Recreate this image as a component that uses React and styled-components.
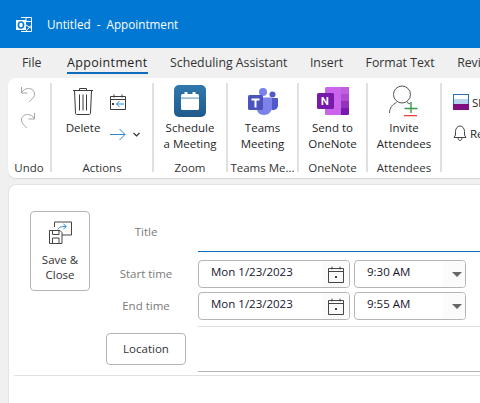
import React from 'react';
import styled, { createGlobalStyle } from 'styled-components';

const GlobalStyle = createGlobalStyle`
  html, body {
    margin: 0;
    padding: 0;
    background: #f0f0f0;
    overflow: hidden;
  }
  body {
    font-family: 'Open Sans', 'Noto Sans', sans-serif;
    color: #262626;
  }
`;

const Window = styled.div`
  width: 480px;
  height: 403px;
  overflow: hidden;
  background: #f0f0f0;
`;

const TitleBar = styled.div`
  height: 48px;
  background: #0078d4;
  display: flex;
  align-items: center;
  padding-left: 16px;
  gap: 14px;
  color: #fff;
  font-size: 11.7px;
  white-space: pre;
`;

const TabBar = styled.div`
  height: 30px;
  display: flex;
  padding-left: 22px;
  gap: 22.5px;
  font-size: 12.3px;
  white-space: nowrap;
`;

const Tab = styled.div`
  position: relative;
  line-height: 30px;
  color: ${({ $active }) => ($active ? '#1f1f1f' : '#333')};
  font-weight: ${({ $active }) => ($active ? 500 : 400)};
  ${({ $active }) =>
    $active &&
    `margin-left: 3px;
    font-size: 12.5px;
    letter-spacing: .35px;
    &::after {
      content: '';
      position: absolute;
      left: 0;
      right: 0;
      bottom: 4px;
      height: 2px;
      background: #0f6cbd;
    }`}
`;

const Ribbon = styled.div`
  height: 100px;
  box-sizing: border-box;
  margin-left: 8px;
  padding: 5px 0 6px;
  display: flex;
  background: #fff;
  border-radius: 8px 0 0 8px;
  box-shadow: 0 1px 1px #d8d8d8;
`;

const Group = styled.div`
  width: ${({ $w }) => $w}px;
  flex: none;
  box-sizing: border-box;
  display: flex;
  flex-direction: column;
  align-items: center;
  border-right: ${({ $last }) => ($last ? 'none' : '2px solid #e0e0e0')};
`;

const GroupBody = styled.div`
  flex: 1;
  align-self: stretch;
  display: flex;
  justify-content: center;
`;

const GroupLabel = styled.div`
  height: 16px;
  line-height: 16px;
  margin-bottom: -4px;
  font-size: 11.5px;
  color: #333;
  white-space: nowrap;
`;

const BigButton = styled.div`
  display: flex;
  flex-direction: column;
  align-items: center;
  padding-top: 2px;
  font-size: 11.5px;
  line-height: 16px;
  text-align: center;
  color: #262626;
  white-space: nowrap;
`;

const BigIcon = styled.div`
  height: 32px;
  margin-bottom: 3px;
  display: flex;
  align-items: center;
  justify-content: center;
`;

const UndoStack = styled.div`
  display: flex;
  flex-direction: column;
  gap: 9px;
  padding: 3px 2px 0 0;
`;

const ActionsRow = styled.div`
  display: flex;
  gap: 10px;
  padding-left: 2px;
`;

const SmallStack = styled.div`
  display: flex;
  flex-direction: column;
  gap: 17px;
  padding-top: 11px;
`;

const MoveRow = styled.div`
  display: flex;
  align-items: center;
  gap: 7px;
`;

const StatusStack = styled.div`
  align-self: stretch;
  display: flex;
  flex-direction: column;
  gap: 15px;
  padding: 11px 0 0 11px;
`;

const StatusRow = styled.div`
  display: flex;
  align-items: center;
  gap: 3px;
  font-size: 11.5px;
  white-space: nowrap;
`;

const Body = styled.div`
  height: 219px;
  margin: 6px 0 0 8px;
  box-sizing: border-box;
  background: #fff;
  border: 1px solid #e4e4e4;
  border-right: none;
  border-bottom: none;
  border-radius: 8px 0 0 0;
`;

const FormRow = styled.div`
  display: flex;
  padding: 26px 0 0 21px;
  height: 190px;
  box-sizing: border-box;
`;

const SaveButton = styled.div`
  width: 60px;
  height: 80px;
  flex: none;
  box-sizing: border-box;
  border: 1px solid #b4b4b4;
  border-radius: 4px;
  display: flex;
  flex-direction: column;
  align-items: center;
  padding-top: 9px;
  font-size: 11.5px;
  line-height: 15px;
  text-align: center;
  color: #333;
`;

const SaveIcon = styled.div`
  height: 24px;
  margin-bottom: 7px;
`;

const Fields = styled.div`
  flex: 1;
  align-self: flex-start;
  margin-left: 16px;
  display: grid;
  grid-template-columns: 80px 1fr;
  column-gap: 12px;
  grid-template-rows: 41px 36px 32px 13px 32px 7px;
  align-items: center;
`;

const FieldLabel = styled.div`
  text-align: center;
  font-size: 11.5px;
  color: #7a7a7a;
  margin-top: ${({ $top }) => $top || 0}px;
`;

const TitleInput = styled.div`
  align-self: stretch;
  border-bottom: 1px solid #0f6cbd;
`;

const DateRow = styled.div`
  display: flex;
  gap: 4px;
  height: 28px;
  align-self: end;
`;

const Control = styled.div`
  width: ${({ $w }) => $w}px;
  height: 28px;
  box-sizing: border-box;
  flex: none;
  display: flex;
  justify-content: space-between;
  border: 1px solid #b4b4b4;
  border-radius: 4px;
  overflow: hidden;
  font-size: 11.5px;
  color: #16162b;
`;

const ControlText = styled.div`
  padding-left: ${({ $pad }) => $pad}px;
  line-height: 22px;
  white-space: nowrap;
`;

const ControlEnd = styled.div`
  width: 16px;
  padding: 0 ${({ $pad }) => $pad}px 0 6px;
  background: #fbfbfb;
  display: flex;
  align-items: center;
  justify-content: center;
`;

const Arrow = styled.div`
  width: 0;
  height: 0;
  border-left: 5px solid transparent;
  border-right: 5px solid transparent;
  border-top: 5px solid #666;
  margin-top: 1px;
`;

const Rule = styled.div`
  grid-column: 2;
  height: 1px;
  align-self: center;
  background: #e0e0e0;
`;

const LocationButton = styled.div`
  height: 32px;
  box-sizing: border-box;
  border: 1px solid #b4b4b4;
  border-radius: 4px;
  font-size: 11.5px;
  line-height: 30px;
  text-align: center;
  color: #333;
`;

const LocationInput = styled.div`
  align-self: stretch;
  border-bottom: 1px solid #b4b4b4;
`;

const BodyRule = styled.div`
  margin-left: 5px;
  height: 1px;
  background: #e0e0e0;
`;

const OutlookIcon = () => (
  <svg width="17" height="17" viewBox="0 0 17 17">
    <path d="M5 1.500h10.500v14H5" fill="none" stroke="#fff" strokeWidth="1" />
    <path d="M5.500 5.500h10M10 1.500v4M10 9l5.500 3.500M10 15l5.500-6" fill="none" stroke="#fff" strokeWidth="1" />
    <rect x="0" y="4" width="10" height="10" fill="#fff" />
    <ellipse cx="5" cy="9" rx="2.600" ry="3" fill="none" stroke="#0078d4" strokeWidth="1.600" />
  </svg>
);

const UndoIcon = ({ flip }) => (
  <svg width="16" height="17" viewBox="0 0 16 17" style={flip ? { transform: 'scaleX(-1)' } : undefined}>
    <path d="M1.500 1v6h6" fill="none" stroke="#a6a6a6" strokeWidth="1" />
    <path d="M1.500 7C3 4 5.500 2.500 8.500 2.500 12 2.500 14.500 5 14.500 8c0 2.500-1.500 4.500-4 6.500l-1 1.500" fill="none" stroke="#a6a6a6" strokeWidth="1" />
  </svg>
);

const TrashIcon = () => (
  <svg width="22" height="29" viewBox="0 0 22 29">
    <path d="M7.500 3V1.500h7V3M1 3.500h20M2.500 3.500l1 22.500c0 1 .7 1.500 1.500 1.500h12c.8 0 1.500-.5 1.500-1.500l1-22.500M7.500 7.500v16M11 7.500v16M14.500 7.500v16" fill="none" stroke="#3b3b3b" strokeWidth="1" />
  </svg>
);

const CalendarArrowIcon = () => (
  <svg width="16" height="17" viewBox="0 0 16 17">
    <path d="M.5 2.500h15v13H.5zM.5 5.500h15M4 .5v3M12 .5v3" fill="none" stroke="#3b3b3b" strokeWidth="1" />
    <rect x="2" y="9" width="2" height="2" fill="#3b3b3b" />
    <path d="M14 10H6.500M9.500 7l-3 3 3 3" fill="none" stroke="#2b88d8" strokeWidth="1" />
  </svg>
);

const MoveIcon = () => (
  <svg width="16" height="13" viewBox="0 0 16 13">
    <path d="M0 6.500h15M9.500 1l5.500 5.500L9.500 12" fill="none" stroke="#2b88d8" strokeWidth="1" />
  </svg>
);

const Chevron = () => (
  <svg width="7" height="5" viewBox="0 0 7 5">
    <path d="M.5 1l3 3 3-3" fill="none" stroke="#333" strokeWidth="1.200" />
  </svg>
);

const ZoomIcon = () => (
  <svg width="32" height="32" viewBox="0 0 32 32">
    <defs>
      <linearGradient id="zoomBg" x1="0" y1="0" x2="0" y2="1">
        <stop offset="0" stopColor="#2f78ad" />
        <stop offset="1" stopColor="#1f5a8c" />
      </linearGradient>
    </defs>
    <rect width="32" height="32" rx="5" fill="url(#zoomBg)" />
    <rect x="7" y="9" width="18" height="16" rx="1.500" fill="#fff" />
    <rect x="7" y="12.500" width="18" height="1.200" fill="#6f9fc4" />
    <rect x="10.500" y="7" width="3" height="4" fill="#fff" />
    <rect x="18.500" y="7" width="3" height="4" fill="#fff" />
  </svg>
);

const TeamsIcon = () => (
  <svg width="30" height="27" viewBox="0 0 30 27">
    <circle cx="24.500" cy="6.500" r="3" fill="#5059c9" />
    <circle cx="15" cy="4" r="4" fill="#7b83eb" />
    <path d="M21 10h8c.6 0 1 .4 1 1v6c0 3-2 5-5 5s-4-2-4-4z" fill="#5059c9" />
    <path d="M9 9.500h14c.6 0 1 .4 1 1V19c0 4.500-3.500 8-8 8s-7-3-7-6z" fill="#7b83eb" />
    <rect x="0" y="7" width="15" height="15" rx="1.500" fill="#4b53bc" />
    <path d="M3.500 10.500h8v2h-3v7h-2v-7h-3z" fill="#fff" />
  </svg>
);

const OneNoteIcon = () => (
  <svg width="32" height="28" viewBox="0 0 32 28">
    <rect x="8" y="0" width="24" height="28" rx="1.500" fill="#ca64ea" />
    <rect x="24" y="0" width="8" height="7" fill="#c05ee0" />
    <rect x="24" y="7" width="8" height="7" fill="#ae4bd5" />
    <rect x="24" y="14" width="8" height="7" fill="#9332bf" />
    <path d="M24 21h8v5.500c0 .8-.7 1.500-1.500 1.500H24z" fill="#7719aa" />
    <rect x="0" y="6" width="17" height="16" rx="1.500" fill="#7719aa" />
    <path d="M4.500 18V10h1.800l3.200 5V10h1.800v8H9.600l-3.300-5.200V18z" fill="#fff" />
  </svg>
);

const InviteIcon = () => (
  <svg width="30" height="32" viewBox="0 0 30 32">
    <circle cx="13" cy="9.500" r="8.500" fill="none" stroke="#555" strokeWidth="1" />
    <path d="M.5 28c0-5 3-8.500 7-10.500M18 17.500c1 .4 2 1 3 1.500" fill="none" stroke="#555" strokeWidth="1" />
    <path d="M22 17v11M15.500 23.500h13" fill="none" stroke="#3a9a4a" strokeWidth="1.400" />
    <rect x="15" y="30" width="13" height="1.300" fill="#e8453c" />
  </svg>
);

const ShowAsIcon = () => (
  <svg width="16" height="16" viewBox="0 0 16 16">
    <rect x=".5" y=".5" width="15" height="15" fill="#fff" stroke="#2b6fb0" />
    <rect x="1" y="5" width="14" height="5" fill="#b9d4ee" />
    <rect x="0" y="10" width="16" height="6" fill="#7f0f7f" />
  </svg>
);

const BellIcon = () => (
  <svg width="14" height="16" viewBox="0 0 14 16">
    <path d="M1 12.500h12l-1.500-2.500V6.500C11.500 3.500 9.500 1 7 1S2.500 3.500 2.500 6.500V10zM5 12.500c0 2 1 3 2 3s2-1 2-3" fill="none" stroke="#444" strokeWidth="1" />
  </svg>
);

const SaveCloseIcon = () => (
  <svg width="23" height="23" viewBox="0 0 23 23">
    <path d="M5.500 6V1H22.500v13H13" fill="none" stroke="#444" strokeWidth="1" />
    <path d="M9 8.500c1-2.500 3-3 8-3M14.500 3l2.800 2.500-2.800 2.500" fill="none" stroke="#2b88d8" strokeWidth="1" />
    <path d="M.5 9.500h10.500l2 2v11H.5z" fill="#fff" stroke="#444" strokeWidth="1" />
    <path d="M3.500 9.500v4h6.500v-4M3.500 22.500v-5.500h6.500v5.500" fill="none" stroke="#444" strokeWidth="1" />
  </svg>
);

const CalendarIcon = () => (
  <svg width="16" height="17" viewBox="0 0 16 17">
    <path d="M.5 2.500h15v14H.5zM.5 5.500h15M4 .5v3M12 .5v3" fill="none" stroke="#444" strokeWidth="1" />
    <rect x="7" y="10" width="2" height="2" fill="#444" />
  </svg>
);

const DateTime = ({ date, time }) => (
  <DateRow>
    <Control $w={152}>
      <ControlText $pad={12}>{date}</ControlText>
      <ControlEnd $pad={5}>
        <CalendarIcon />
      </ControlEnd>
    </Control>
    <Control $w={112}>
      <ControlText $pad={12}>{time}</ControlText>
      <ControlEnd $pad={0}>
        <Arrow />
      </ControlEnd>
    </Control>
  </DateRow>
);

export default function App() {
  return (
    <>
      <GlobalStyle />
      <Window>
        <TitleBar>
          <OutlookIcon />
          <span>Untitled  -  Appointment</span>
        </TitleBar>
        <TabBar>
          <Tab>File</Tab>
          <Tab $active>Appointment</Tab>
          <Tab>Scheduling Assistant</Tab>
          <Tab>Insert</Tab>
          <Tab>Format Text</Tab>
          <Tab>Review</Tab>
        </TabBar>
        <Ribbon>
          <Group $w={44}>
            <GroupBody>
              <UndoStack>
                <UndoIcon />
                <UndoIcon flip />
              </UndoStack>
            </GroupBody>
            <GroupLabel>Undo</GroupLabel>
          </Group>
          <Group $w={102}>
            <GroupBody>
              <ActionsRow>
                <BigButton>
                  <BigIcon>
                    <TrashIcon />
                  </BigIcon>
                  Delete
                </BigButton>
                <SmallStack>
                  <CalendarArrowIcon />
                  <MoveRow>
                    <MoveIcon />
                    <Chevron />
                  </MoveRow>
                </SmallStack>
              </ActionsRow>
            </GroupBody>
            <GroupLabel>Actions</GroupLabel>
          </Group>
          <Group $w={74}>
            <GroupBody>
              <BigButton>
                <BigIcon>
                  <ZoomIcon />
                </BigIcon>
                Schedule
                <br />a Meeting
              </BigButton>
            </GroupBody>
            <GroupLabel>Zoom</GroupLabel>
          </Group>
          <Group $w={71}>
            <GroupBody>
              <BigButton>
                <BigIcon>
                  <TeamsIcon />
                </BigIcon>
                Teams
                <br />Meeting
              </BigButton>
            </GroupBody>
            <GroupLabel>Teams Me...</GroupLabel>
          </Group>
          <Group $w={69}>
            <GroupBody>
              <BigButton>
                <BigIcon>
                  <OneNoteIcon />
                </BigIcon>
                Send to
                <br />OneNote
              </BigButton>
            </GroupBody>
            <GroupLabel>OneNote</GroupLabel>
          </Group>
          <Group $w={74}>
            <GroupBody>
              <BigButton>
                <BigIcon>
                  <InviteIcon />
                </BigIcon>
                Invite
                <br />Attendees
              </BigButton>
            </GroupBody>
            <GroupLabel>Attendees</GroupLabel>
          </Group>
          <Group $w={120} $last>
            <StatusStack>
              <StatusRow>
                <ShowAsIcon />
                Show As
              </StatusRow>
              <StatusRow>
                <BellIcon />
                Reminder
              </StatusRow>
            </StatusStack>
          </Group>
        </Ribbon>
        <Body>
          <FormRow>
            <SaveButton>
              <SaveIcon>
                <SaveCloseIcon />
              </SaveIcon>
              Save &amp;
              <br />Close
            </SaveButton>
            <Fields>
              <FieldLabel>Title</FieldLabel>
              <TitleInput />
              <FieldLabel $top={6}>Start time</FieldLabel>
              <DateTime date="Mon 1/23/2023" time="9:30 AM" />
              <FieldLabel $top={2}>End time</FieldLabel>
              <DateTime date="Mon 1/23/2023" time="9:55 AM" />
              <Rule />
              <LocationButton>Location</LocationButton>
              <div />
              <div />
              <LocationInput />
            </Fields>
          </FormRow>
          <BodyRule />
        </Body>
      </Window>
    </>
  );
}
